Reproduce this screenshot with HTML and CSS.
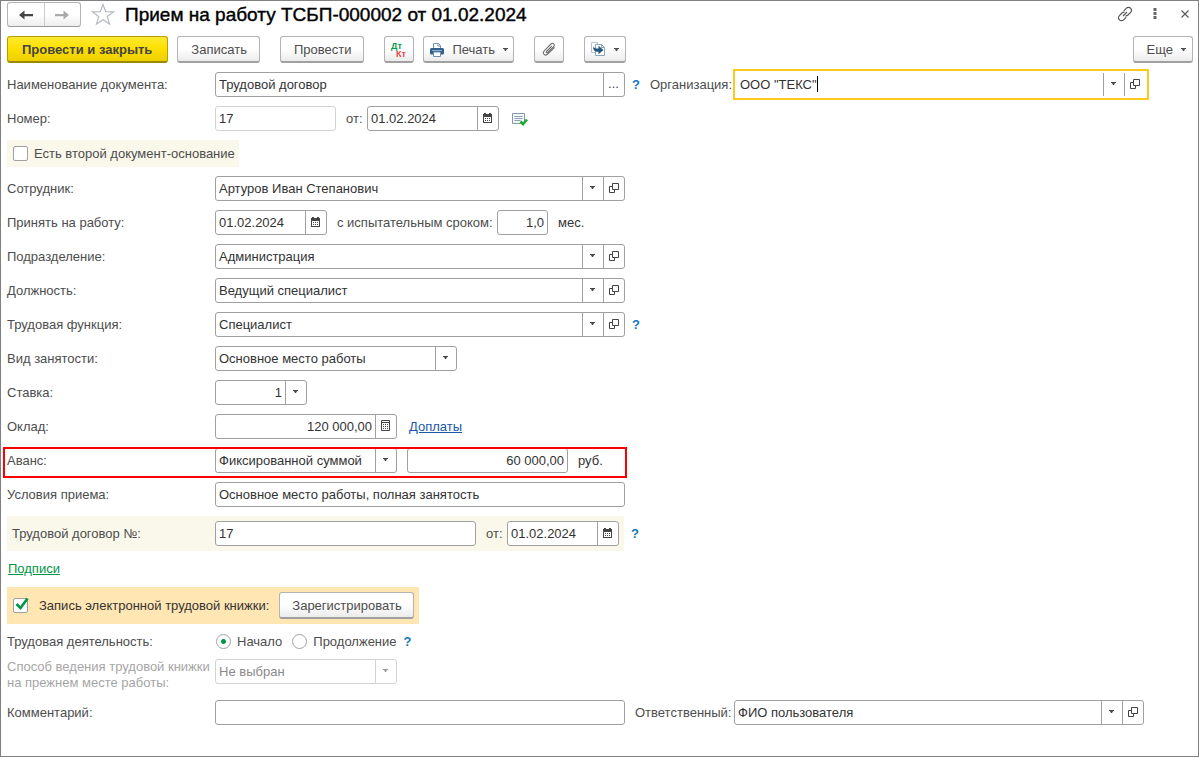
FILE: index.html
```html
<!DOCTYPE html>
<html lang="ru">
<head>
<meta charset="utf-8">
<meta name="viewport" content="width=device-width, initial-scale=1">
<title>Прием на работу ТСБП-000002 от 01.02.2024</title>
<link rel="stylesheet" href="styles.css">
</head>
<body>
<svg class="sprite" aria-hidden="true">
  <symbol id="i-caret" viewBox="0 0 5 3"><path d="M0 0h5v1H4L3 3H2L1 1H0z" fill="currentColor"/></symbol>
  <symbol id="i-open" viewBox="0 0 10 10"><path d="M3.5.5h6v6h-6zM3 3.5H.5v6h5V7" fill="none" stroke="currentColor"/></symbol>
  <symbol id="i-cal" viewBox="0 0 9 10"><path d="M1 0h2v1h3V0h2v1h1v9H0V1h1zM1 4v5h7V4z" fill="currentColor" fill-rule="evenodd"/><path d="M2 5h1v1H2zM4 5h1v1H4zM6 5h1v1H6zM2 7h1v1H2zM4 7h1v1H4zM6 7h1v1H6z" fill="currentColor"/></symbol>
  <symbol id="i-calc" viewBox="0 0 9 11"><path d="M.5.5h8v10h-8zM0 2.5h9" fill="none" stroke="currentColor"/><path d="M2 4h1v1H2zM4 4h1v1H4zM6 4h1v1H6zM2 6h1v1H2zM4 6h1v1H4zM6 6h1v1H6zM2 8h1v1H2zM4 8h1v1H4zM6 8h1v1H6z" fill="currentColor"/></symbol>
</svg>

<main class="window">
  <header class="titlebar">
    <div class="history">
      <button class="history-btn" type="button" aria-label="Назад"><svg width="14" height="10" viewBox="0 0 14 10"><path d="M0 5l5.500-4.500v3.500H14v2.200H5.500v3.300z" fill="#444"/></svg></button>
      <button class="history-btn" type="button" aria-label="Вперед"><svg width="14" height="10" viewBox="0 0 14 10"><path d="M14 5L8.500.5V4H0v2.200h8.500v3.300z" fill="#aaa"/></svg></button>
    </div>
    <button class="plain star" type="button" aria-label="В избранное"><svg width="24" height="23" viewBox="0 0 24 23"><path d="M12 1.500l2.700 7.200 7.800.2-6.200 4.700 2.200 7.500L12 16.800l-6.500 4.300 2.200-7.500-6.200-4.700 7.800-.2z" fill="#fff" stroke="#b4bac3" stroke-width="1.200"/></svg></button>
    <h1 class="title">Прием на работу ТСБП-000002 от 01.02.2024</h1>
    <div class="window-tools">
      <button class="plain" type="button" aria-label="Получить ссылку"><svg width="16" height="16" viewBox="0 0 16 16" fill="none" stroke="#555" stroke-width="1.200"><path d="M6.800 4.800l2.600-2.600a2.900 2.900 0 0 1 4.200 0 2.900 2.900 0 0 1 0 4.200L11 9a2.800 2.800 0 0 1-2.500.8M9.200 11.200l-2.600 2.600a2.900 2.900 0 0 1-4.200 0 2.900 2.900 0 0 1 0-4.200L5 7a2.800 2.800 0 0 1 2.500-.8M6 10l4-4"/></svg></button>
      <button class="plain dots" type="button" aria-label="Меню"><svg width="4" height="12" viewBox="0 0 4 12"><path d="M.5 0h3v3h-3zM.5 4h3v3h-3zM.5 8h3v3h-3z" fill="#666"/></svg></button>
      <button class="plain" type="button" aria-label="Закрыть"><svg width="8" height="8" viewBox="0 0 8 8"><path d="M.5.5l7 7m0-7l-7 7" stroke="#555" stroke-width="1.100"/></svg></button>
    </div>
  </header>

  <div class="toolbar">
    <button class="btn btn-primary" type="button">Провести и закрыть</button>
    <button class="btn after-tight" type="button">Записать</button>
    <button class="btn" type="button">Провести</button>
    <button class="btn btn-icon" type="button" aria-label="Дебет и кредит"><svg width="18" height="17" viewBox="0 0 18 17" font-family="Liberation Sans, sans-serif" font-weight="bold"><text x="1" y="8" font-size="9" fill="#0a9a50">Дт</text><text x="6" y="16" font-size="9" fill="#e04848">Кт</text></svg></button>
    <button class="btn btn-print after-tight" type="button"><svg width="14" height="14" viewBox="0 0 14 14"><path d="M3.500 6V.5h5l2 2V6" fill="#fff" stroke="#7593ad"/><path d="M8 .5V3h2.500" fill="none" stroke="#7593ad"/><rect y="5" width="14" height="6.500" rx="1.500" fill="#2f618f"/><path d="M2 7.500h10" stroke="#8fb0cb"/><path d="M3.500 9h7v4.500h-7z" fill="#fff" stroke="#6f8da8"/></svg>Печать<svg class="caret" width="5" height="3"><use href="#i-caret"/></svg></button>
    <button class="btn btn-icon" type="button" aria-label="Файлы"><svg width="14" height="14" viewBox="0 0 14 14" fill="none" stroke="#707070" stroke-width="1.100"><path d="M9.800 4.200L4.500 9.500c-.8.900.3 1.900 1.100 1.100l6-6c2-2-.7-4.400-2.600-2.600L2.200 8.800c-2.600 2.700 1 5.800 3.500 3.400l6.800-6.800"/></svg></button>
    <button class="btn btn-base" type="button" aria-label="Создать на основании"><svg width="15" height="15" viewBox="0 0 15 15"><path d="M.5.500h6v10h-6z" fill="#fff" stroke="#b4c4d1"/><path d="M4.500 2.500h6l3 3v8h-9z" fill="#fff" stroke="#8ca5b8"/><path d="M10.500 2.500v3h3" fill="none" stroke="#8ca5b8"/><path d="M2.500 4C2.500 6 4 6.500 7.500 6.500V3.800L12.500 8l-5 4.200V9.800C3.500 9.800 1.500 8 2.500 4z" fill="#24557f"/></svg><svg class="caret" width="5" height="3"><use href="#i-caret"/></svg></button>
    <button class="btn btn-more" type="button">Еще<svg class="caret" width="5" height="3"><use href="#i-caret"/></svg></button>
  </div>

  <form class="form">
    <div class="row row-top">
      <label class="name" for="doc">Наименование документа:</label>
      <div class="field w-full"><input id="doc" type="text" value="Трудовой договор"><button class="cell" type="button">...</button></div>
      <button class="help" type="button">?</button>
      <label class="side-label" for="org">Организация:</label>
      <div class="field field-active"><input id="org" type="text" value='ООО "ТЕКС"'><span class="text-cursor"></span><button class="cell" type="button" aria-label="Выбрать"><svg width="5" height="3"><use href="#i-caret"/></svg></button><button class="cell" type="button" aria-label="Открыть"><svg width="10" height="10"><use href="#i-open"/></svg></button></div>
    </div>

    <div class="row">
      <label class="name" for="num">Номер:</label>
      <div class="field w-num field-muted"><input id="num" type="text" value="17" readonly></div>
      <label class="from" for="num-date">от:</label>
      <div class="field w-date-lg"><input id="num-date" type="text" value="01.02.2024"><button class="cell" type="button" aria-label="Календарь"><svg width="9" height="10"><use href="#i-cal"/></svg></button></div>
      <button class="plain posted" type="button" aria-label="Документ проведен"><svg width="16" height="14" viewBox="0 0 16 14"><path d="M.5 1.500h12v10H.5z" fill="#f4f7fa" stroke="#8297aa"/><path d="M2.500 4.500h8M2.500 6.500h8M2.500 8.500h6" stroke="#8ba0b2"/><path d="M8.500 9.500l2.500 2.500 4-4.500" fill="none" stroke="#1faa32" stroke-width="2.600"/></svg></button>
    </div>

    <div class="band band-second">
      <span class="check"><input id="second" type="checkbox"></span>
      <label for="second">Есть второй документ-основание</label>
    </div>

    <div class="row">
      <label class="name" for="emp">Сотрудник:</label>
      <div class="field w-full"><input id="emp" type="text" value="Артуров Иван Степанович"><button class="cell" type="button" aria-label="Выбрать"><svg width="5" height="3"><use href="#i-caret"/></svg></button><button class="cell" type="button" aria-label="Открыть"><svg width="10" height="10"><use href="#i-open"/></svg></button></div>
    </div>

    <div class="row">
      <label class="name" for="hire">Принять на работу:</label>
      <div class="field w-date"><input id="hire" type="text" value="01.02.2024"><button class="cell" type="button" aria-label="Календарь"><svg width="9" height="10"><use href="#i-cal"/></svg></button></div>
      <label class="trial" for="trial">с испытательным сроком:</label>
      <div class="field w-trial"><input class="num" id="trial" type="text" value="1,0"></div>
      <span class="unit">мес.</span>
    </div>

    <div class="row">
      <label class="name" for="dep">Подразделение:</label>
      <div class="field w-full"><input id="dep" type="text" value="Администрация"><button class="cell" type="button" aria-label="Выбрать"><svg width="5" height="3"><use href="#i-caret"/></svg></button><button class="cell" type="button" aria-label="Открыть"><svg width="10" height="10"><use href="#i-open"/></svg></button></div>
    </div>

    <div class="row">
      <label class="name" for="pos">Должность:</label>
      <div class="field w-full"><input id="pos" type="text" value="Ведущий специалист"><button class="cell" type="button" aria-label="Выбрать"><svg width="5" height="3"><use href="#i-caret"/></svg></button><button class="cell" type="button" aria-label="Открыть"><svg width="10" height="10"><use href="#i-open"/></svg></button></div>
    </div>

    <div class="row">
      <label class="name" for="func">Трудовая функция:</label>
      <div class="field w-full"><input id="func" type="text" value="Специалист"><button class="cell" type="button" aria-label="Выбрать"><svg width="5" height="3"><use href="#i-caret"/></svg></button><button class="cell" type="button" aria-label="Открыть"><svg width="10" height="10"><use href="#i-open"/></svg></button></div>
      <button class="help" type="button">?</button>
    </div>

    <div class="row">
      <label class="name" for="kind">Вид занятости:</label>
      <div class="field w-kind"><select id="kind"><option>Основное место работы</option></select><span class="cell"><svg width="5" height="3"><use href="#i-caret"/></svg></span></div>
    </div>

    <div class="row">
      <label class="name" for="rate">Ставка:</label>
      <div class="field w-rate"><input class="num" id="rate" type="text" value="1"><button class="cell" type="button" aria-label="Выбрать"><svg width="5" height="3"><use href="#i-caret"/></svg></button></div>
    </div>

    <div class="row">
      <label class="name" for="salary">Оклад:</label>
      <div class="field w-sum"><input class="num" id="salary" type="text" value="120 000,00"><button class="cell" type="button" aria-label="Калькулятор"><svg width="9" height="11"><use href="#i-calc"/></svg></button></div>
      <a class="link-extra" href="#">Доплаты</a>
    </div>

    <div class="row row-marked">
      <label class="name" for="adv">Аванс:</label>
      <div class="field w-sum"><select id="adv"><option>Фиксированной суммой</option></select><span class="cell"><svg width="5" height="3"><use href="#i-caret"/></svg></span></div>
      <div class="field w-advance"><input class="num" type="text" value="60 000,00" aria-label="Сумма аванса"></div>
      <span class="unit">руб.</span>
    </div>

    <div class="row">
      <label class="name" for="cond">Условия приема:</label>
      <div class="field w-full"><input id="cond" type="text" value="Основное место работы, полная занятость"></div>
    </div>

    <div class="row">
      <div class="band band-contract">
        <label class="name" for="contract">Трудовой договор №:</label>
        <div class="field w-contract"><input id="contract" type="text" value="17"></div>
        <label class="from" for="contract-date">от:</label>
        <div class="field w-date"><input id="contract-date" type="text" value="01.02.2024"><button class="cell" type="button" aria-label="Календарь"><svg width="9" height="10"><use href="#i-cal"/></svg></button></div>
      </div>
      <button class="help" type="button">?</button>
    </div>

    <div class="row row-link"><a class="link-sign" href="#">Подписи</a></div>

    <div class="band band-book">
      <span class="check"><input id="book" type="checkbox" checked><svg class="tick" width="14" height="14" viewBox="0 0 14 14"><path d="M1.500 7l4 4L12.500 1.500" fill="none" stroke="#009646" stroke-width="2.600"/></svg></span>
      <label for="book">Запись электронной трудовой книжки:</label>
      <button class="btn btn-register" type="button">Зарегистрировать</button>
    </div>

    <div class="row row-radio" role="radiogroup" aria-labelledby="activity">
      <span class="name" id="activity">Трудовая деятельность:</span>
      <label class="radio"><input type="radio" name="activity" checked>Начало</label>
      <label class="radio"><input type="radio" name="activity">Продолжение</label>
      <button class="help" type="button">?</button>
    </div>

    <div class="row row-disabled">
      <label class="name" for="way">Способ ведения трудовой книжки<br>на прежнем месте работы:</label>
      <div class="field w-sum field-muted"><select id="way" disabled><option>Не выбран</option></select><span class="cell"><svg width="5" height="3"><use href="#i-caret"/></svg></span></div>
    </div>

    <div class="row">
      <label class="name" for="note">Комментарий:</label>
      <div class="field w-full"><input id="note" type="text"></div>
      <label class="resp-label" for="resp">Ответственный:</label>
      <div class="field field-resp"><input id="resp" type="text" value="ФИО пользователя"><button class="cell" type="button" aria-label="Выбрать"><svg width="5" height="3"><use href="#i-caret"/></svg></button><button class="cell" type="button" aria-label="Открыть"><svg width="10" height="10"><use href="#i-open"/></svg></button></div>
    </div>
  </form>
</main>
</body>
</html>
```

FILE: styles.css
```css
*,
*::after {
  box-sizing: border-box;
}

body {
  margin: 0;
  background: #fff;
  color: #4d4d4d;
  font: 13px/16px "Liberation Sans", Arial, sans-serif;
}

button,
input,
select {
  margin: 0;
  font: inherit;
  color: inherit;
}

svg {
  display: block;
  flex: none;
}

.sprite {
  position: absolute;
  width: 0;
  height: 0;
}

.window {
  min-height: 100vh;
  padding: 1px 5px 8px 6px;
  border: 1px solid #808080;
}

/* Title bar */

.titlebar {
  display: flex;
  align-items: center;
  height: 25px;
}

.history {
  display: flex;
  width: 74px;
  height: 25px;
  border: 1px solid #b3b3b3;
  border-bottom-color: #999;
  border-radius: 3px;
  background: linear-gradient(#fff 50%, #ededed);
}

.history-btn {
  display: flex;
  flex: 1;
  align-items: center;
  justify-content: center;
  padding: 0;
  border: 0;
  background: none;
}

.history-btn + .history-btn {
  border-left: 1px solid #ccc;
}

.plain {
  padding: 0;
  border: 0;
  background: none;
}

.star {
  margin: 0 10px;
}

.title {
  margin: 0;
  color: #000;
  font-size: 19px;
  font-weight: 400;
  line-height: 24px;
  -webkit-text-stroke: 0.4px #000;
}

.window-tools {
  display: flex;
  gap: 20px;
  align-items: center;
  margin-left: auto;
  padding: 0 4px 2px 0;
}

.dots {
  margin-right: 4px;
}

/* Command bar */

.toolbar {
  display: flex;
  gap: 20px;
  padding: 9px 0 6px;
}

.btn {
  display: flex;
  align-items: center;
  justify-content: center;
  height: 27px;
  padding: 1px 12px 0 13px;
  border: 1px solid #b3b3b3;
  border-bottom: 2px solid #a0a0a0;
  border-radius: 3px;
  background: linear-gradient(#fff 50%, #ebebeb);
  white-space: nowrap;
}

.after-tight {
  margin-left: -11px;
}

.btn-primary {
  padding: 1px 15px 0 14px;
  border-color: #b79f00;
  border-bottom-color: #9d8800;
  background: linear-gradient(#ffe930, #fddf00 50%, #eccf00);
  color: #444;
  font-weight: 700;
}

.btn-icon {
  width: 30px;
  padding: 0;
}

.btn-print {
  gap: 8px;
  padding: 1px 5px 0 6px;
}

.btn-base {
  gap: 8px;
  padding: 0 6px;
}

.btn-more {
  gap: 8px;
  margin-left: auto;
  padding: 1px 6px 0 13px;
}

/* Form */

.form {
  display: flex;
  flex-direction: column;
  gap: 9px;
}

.row {
  display: flex;
  align-items: center;
}

.row-top {
  margin-bottom: -3px;
}

.name {
  flex: none;
  width: 208px;
  white-space: nowrap;
}

.field {
  position: relative;
  display: flex;
  flex: none;
  height: 25px;
  border: 1px solid #a0a0a0;
  border-radius: 3px;
  background: #fff;
  color: #333;
}

.field input,
.field select {
  flex: 1;
  min-width: 0;
  padding: 0 3px;
  border: 0;
  outline: 0;
  background: none;
  appearance: none;
}

.field select:disabled {
  opacity: 1;
}

.field .num {
  text-align: right;
}

.cell {
  display: flex;
  flex: none;
  align-items: center;
  justify-content: center;
  width: 21px;
  padding: 0 1px 2px 0;
  border: 0;
  border-left: 1px solid #a0a0a0;
  background: none;
  color: #444;
}

.field-muted {
  border-color: #d3d3d3;
}

.field-muted .cell {
  border-color: #d3d3d3;
  color: #999;
}

.field-active {
  flex: 1;
  height: 31px;
  margin-right: 44px;
  padding: 2px;
  border: 2px solid #fcc91f;
  border-radius: 0;
}

.text-cursor {
  position: absolute;
  top: 5px;
  left: 82px;
  width: 1px;
  height: 16px;
  background: #000;
}

.field-resp {
  flex: 1;
  margin-right: 49px;
}

.w-full { width: 410px; }
.w-num { width: 121px; }
.w-date { width: 112px; }
.w-date-lg { width: 132px; }
.w-trial { width: 51px; }
.w-kind { width: 242px; }
.w-rate { width: 92px; }
.w-sum { width: 182px; }
.w-contract { width: 261px; }

.w-advance {
  width: 161px;
  margin-left: 10px;
}

.help {
  flex: none;
  width: 25px;
  padding: 0 0 0 7px;
  border: 0;
  background: none;
  color: #1477bd;
  font-weight: 700;
  text-align: left;
}

.side-label {
  width: 83px;
}

.resp-label {
  width: 109px;
  padding-left: 10px;
}

.from {
  width: 31px;
  padding-left: 10px;
}

.posted {
  margin-left: 13px;
}

.trial {
  width: 170px;
  padding-left: 10px;
  white-space: nowrap;
}

.unit {
  padding-left: 10px;
  color: #333;
}

.link-extra {
  margin-left: 12px;
  color: #1a57a8;
}

.link-sign {
  padding-left: 1px;
  color: #009646;
}

.row-link {
  height: 18px;
}

.row-marked {
  position: relative;
}

.row-marked::after {
  position: absolute;
  top: -1px;
  bottom: -5px;
  left: -4px;
  width: 624px;
  border: 2px solid #f00;
  content: "";
  pointer-events: none;
}

.band {
  display: flex;
  align-items: center;
  align-self: flex-start;
  background: #faf8eb;
}

.band-second {
  height: 27px;
  padding: 0 4px 0 6px;
}

.band-second label {
  margin-left: 6px;
}

.band-contract {
  height: 35px;
  padding-right: 5px;
}

.band-contract .name {
  padding-left: 5px;
}

.band-book {
  height: 37px;
  padding: 0 5px 0 6px;
  background: #ffe6b3;
  color: #333;
}

.band-book label {
  margin-left: 11px;
}

.btn-register {
  margin-left: 10px;
  padding: 1px 11px 0 12px;
  color: #4d4d4d;
}

.check {
  position: relative;
  display: flex;
}

.check input {
  width: 15px;
  height: 15px;
  border: 1px solid #a0a0a0;
  border-radius: 2px;
  background: #fff;
  appearance: none;
}

.tick {
  position: absolute;
  top: -1px;
  left: 2px;
  pointer-events: none;
}

.row-radio {
  height: 17px;
}

.radio {
  display: flex;
  gap: 6px;
  align-items: center;
  padding-left: 1px;
}

.radio + .radio {
  margin-left: 9px;
}

.radio input {
  width: 15px;
  height: 15px;
  border: 1px solid #a0a0a0;
  border-radius: 50%;
  background: #fff;
  appearance: none;
}

.radio input:checked {
  background: radial-gradient(circle, #009646 2px, #fff 3px);
}

.row-disabled {
  align-items: flex-start;
  color: #a6a6a6;
}

.row-disabled .field {
  color: #8a8a8a;
}
```
